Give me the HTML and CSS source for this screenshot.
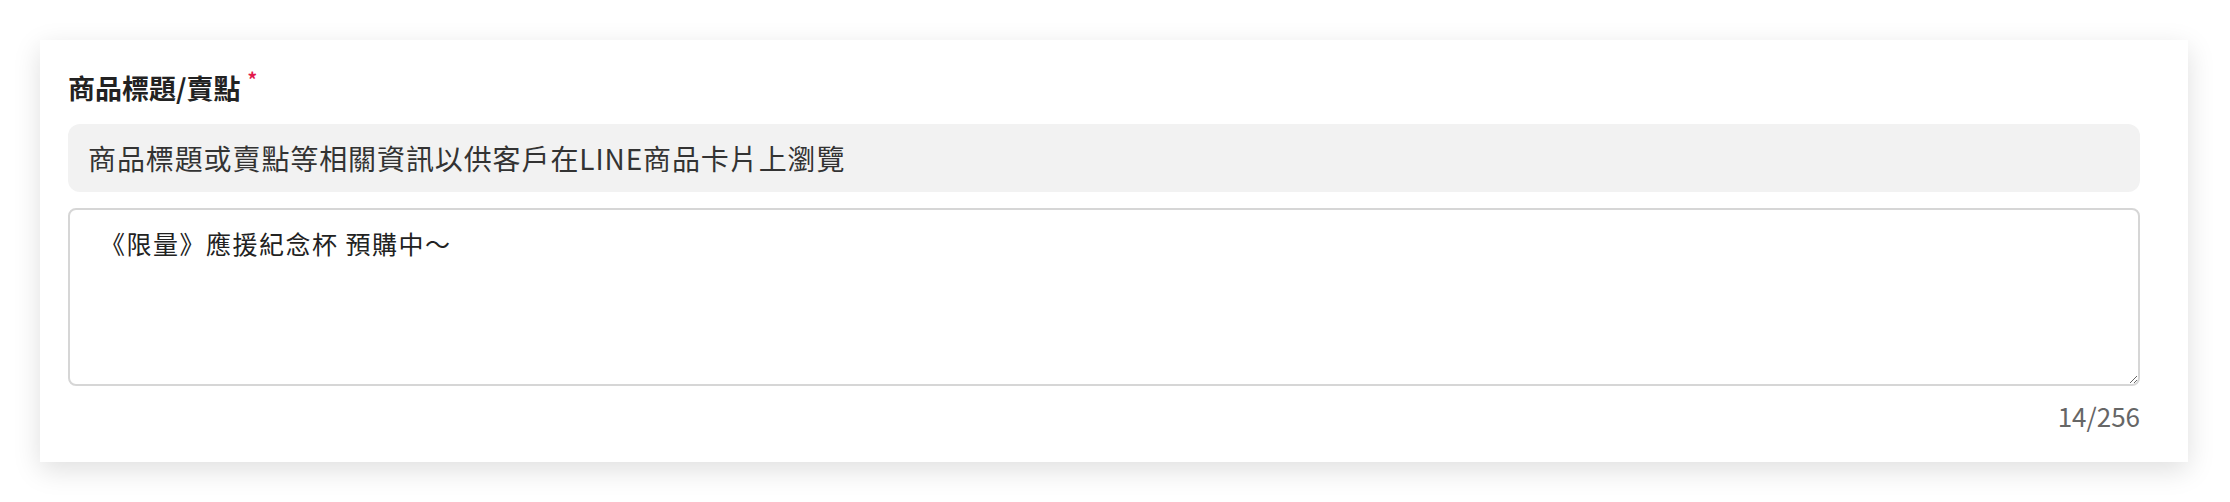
FILE: index.html
```html
<!DOCTYPE html>
<html lang="zh-Hant">
<head>
  <meta charset="UTF-8">
  <title>商品標題/賣點</title>
  <link rel="stylesheet" href="styles.css">
</head>
<body>
  <div class="page">
    <div class="card">
      <div class="field-label">商品標題/賣點<span class="required">*</span></div>

      <div class="hint-box">商品標題或賣點等相關資訊以供客戶在LINE商品卡片上瀏覽</div>

      <textarea class="title-input" name="title" maxlength="256">《限量》應援紀念杯 預購中～</textarea>

      <div class="char-count">14/256</div>
    </div>
  </div>
</body>
</html>
```

FILE: styles.css
```css
body {
  margin: 0;
  padding: 0;
  background: #fff;
  font-family: "Noto Sans CJK TC", "Noto Sans", sans-serif;
  color: #222;
}

.page {
  padding: 40px 42px 40px 40px;
}

.card {
  background: #fff;
  padding: 27px 48px 27px 28px;
  box-shadow: 0 8px 26px rgba(0, 0, 0, 0.13);
}

.field-label {
  font-size: 27px;
  font-weight: bold;
  line-height: 41px;
  color: #222;
}

.required {
  color: #e21a4c;
  font-size: 19px;
  font-weight: bold;
  vertical-align: top;
  line-height: 24px;
  margin-left: 7px;
}

.hint-box {
  margin-top: 16px;
  height: 68px;
  line-height: 68px;
  padding: 0 20px;
  background: #f2f2f2;
  border-radius: 12px;
  font-size: 28px;
  letter-spacing: 0.9px;
  color: #333;
}

.title-input {
  display: block;
  box-sizing: border-box;
  width: 100%;
  height: 178px;
  margin: 16px 0 0;
  padding: 15px 30px;
  border: 2px solid #d6d6d6;
  border-radius: 8px;
  font-family: "Noto Sans CJK TC", "Noto Sans", sans-serif;
  font-size: 25px;
  letter-spacing: 1.5px;
  line-height: 36px;
  color: #222;
  background: #fff;
  outline: none;
}

.char-count {
  margin-top: 10px;
  text-align: right;
  font-size: 26px;
  line-height: 39px;
  color: #666;
}
```
